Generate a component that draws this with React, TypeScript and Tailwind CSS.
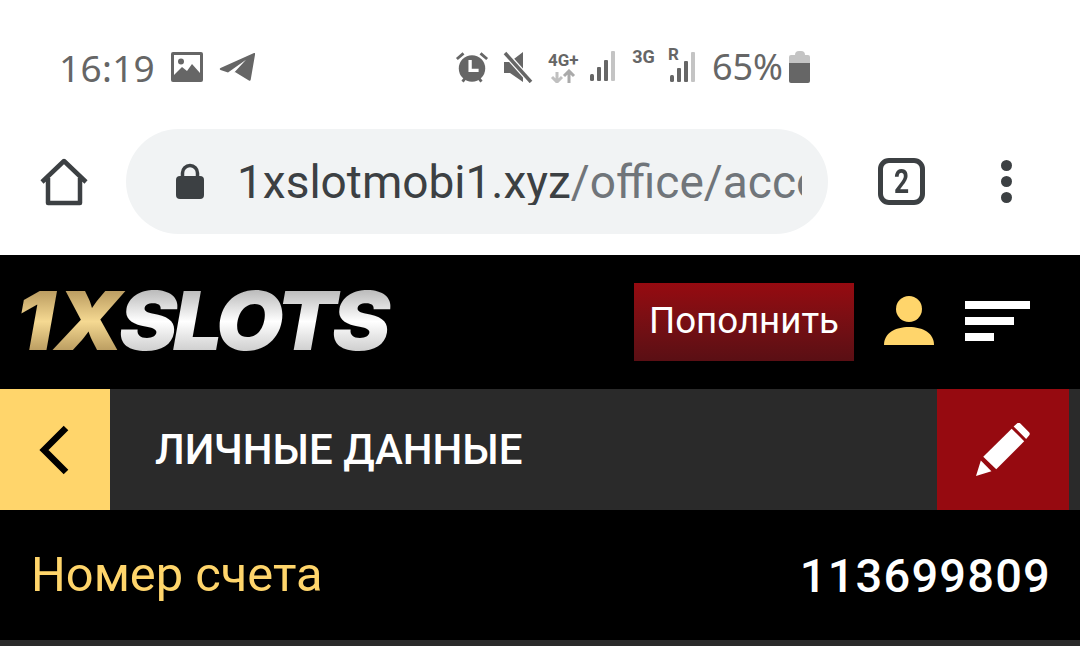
function Signal({ className = '' }: { className?: string }) {
  return (
    <svg width="28" height="30" viewBox="0 0 28 30" className={className}>
      <rect x="0" y="23" width="4" height="7" rx="1.5" fill="#666" />
      <rect x="7" y="16" width="4" height="14" rx="1" fill="#666" />
      <rect x="14" y="9" width="4" height="21" rx="1" fill="#666" />
      <rect x="21" y="0" width="4" height="30" rx="1" fill="#c4c4c4" />
    </svg>
  );
}

function StatusBar() {
  return (
    <div className="h-[129px] flex items-center pl-[59px] pr-[270px] pt-[5px] text-[#666666]">
      <span className="text-[37px] leading-none font-['Noto_Sans',sans-serif] tracking-[0.3px] w-[112px]">16:19</span>
      {/* gallery */}
      <svg width="32" height="30" viewBox="0 0 32 30">
        <rect width="32" height="30" rx="2" fill="#666" />
        <rect x="3" y="3" width="26" height="20" fill="#fff" />
        <circle cx="10" cy="9.5" r="3" fill="#666" />
        <path d="M3 23l8-8 5 4 5-7 8 9v6H3z" fill="#666" />
      </svg>
      {/* telegram */}
      <svg width="36" height="30" viewBox="0 0 36 30" className="ml-[16px]">
        <path d="M35 1c.8-.3 1.300.3 1.100 1.200l-4.400 25.600c-.2 1-1 1.300-1.800.7L16 20l-1 .8 12-13-18 12.600-7.500-2.500c-1-.4-1-1.300 0-1.800z" fill="#666" />
      </svg>

      <div className="ml-auto flex items-center">
        {/* alarm */}
        <svg width="34" height="33" viewBox="0 0 36 34">
          <path d="M2 8l7-6M34 8l-7-6M8 32l3-4M28 32l-3-4" stroke="#666" strokeWidth="3" />
          <circle cx="18" cy="18" r="14" fill="#666" />
          <path d="M16 9v11h9" stroke="#fff" strokeWidth="3.500" fill="none" />
        </svg>
        {/* muted */}
        <svg width="30" height="32" viewBox="0 0 30 32" className="ml-[14px]">
          <path d="M1 11h6L20 1v30L7 22H1z" fill="#666" />
          <path d="M2 2l26 29" stroke="#fff" strokeWidth="6" />
          <path d="M2 2l26 29" stroke="#666" strokeWidth="3.500" />
        </svg>
        <div className="ml-[14px] w-[32px] flex flex-col items-center">
          <span className="text-[17px] leading-[17px] font-bold font-['Roboto',sans-serif] whitespace-nowrap">4G+</span>
          <svg width="26" height="14" viewBox="0 0 26 14">
            <path d="M7 14V4M2 9l5 5 5-5" stroke="#c0c0c0" strokeWidth="3" fill="none" transform="translate(0 -1)" />
            <path d="M19 14V2M14 7l5-5 5 5" stroke="#aaa" strokeWidth="3" fill="none" />
          </svg>
        </div>
        <Signal className="ml-[11px] -mt-[2px]" />
        <span className="ml-[14px] mb-[20px] text-[18px] leading-none font-bold font-['Roboto',sans-serif]">3G</span>
        <div className="relative ml-[13px] w-[29px] h-[32px] -mt-[4px]">
          <span className="absolute left-0 -top-[3px] text-[17px] leading-none font-bold font-['Roboto',sans-serif]">R</span>
          <Signal className="absolute left-[2px] top-[3px]" />
        </div>
        <span className="ml-[15px] text-[36px] leading-none font-['Noto_Sans',sans-serif]">65%</span>
        {/* battery */}
        <div className="ml-[6px] flex flex-col items-center">
          <div className="w-[10px] h-[4px] rounded-t-sm bg-[#c4c4c4]" />
          <div className="w-[21px] h-[28px] rounded-[2px] bg-[#666666] border-t-[8px] border-[#c4c4c4]" />
        </div>
      </div>
    </div>
  );
}

function BrowserBar() {
  return (
    <div className="h-[126px] flex items-start pl-[40px] font-['Roboto',sans-serif]">
      <svg width="48" height="48" viewBox="0 0 48 48" className="mt-[29px]">
        <path d="M2 24L24 3l22 21M8 20v25h32V20" stroke="#3c4043" strokeWidth="4.500" fill="none" strokeLinejoin="round" />
      </svg>
      <div className="ml-[38px] w-[702px] h-[105px] rounded-full bg-[#f1f3f4] flex items-center pl-[49px]">
        <svg width="30" height="38" viewBox="0 0 30 38" className="shrink-0">
          <path d="M7.500 15V10a7.500 7.500 0 0 1 15 0v5" stroke="#3c4043" strokeWidth="3.500" fill="none" />
          <rect x="1" y="13" width="28" height="23" rx="4" fill="#3c4043" />
        </svg>
        <div className="ml-[32px] w-[565px] overflow-hidden whitespace-nowrap text-[46px] leading-none pt-[1px]">
          <span className="text-[#3c4043]">1xslotmobi1.xyz</span>
          <span className="text-[#70757a]">/office/account</span>
        </div>
      </div>
      <div className="ml-[50px] mt-[29px] w-[47px] h-[47px] rounded-[11px] border-[5px] border-[#3c4043] flex items-center justify-center text-[33px] leading-none font-bold text-[#3c4043]">
        <span className="scale-x-[0.8]">2</span>
      </div>
      <div className="ml-[76px] mt-[31px] flex flex-col gap-[5px]">
        <span className="w-[11px] h-[11px] rounded-full bg-[#3c4043]" />
        <span className="w-[11px] h-[11px] rounded-full bg-[#3c4043]" />
        <span className="w-[11px] h-[11px] rounded-full bg-[#3c4043]" />
      </div>
    </div>
  );
}

function SiteHeader() {
  return (
    <div className="h-[134px] bg-black flex items-center pl-[21px] font-['Roboto',sans-serif]">
      <div className="w-[613px]">
        <div className="-ml-[6px] flex items-center origin-left scale-x-[1.08] font-['Inter',sans-serif] font-black italic text-[81px] leading-none pb-[2px]">
          <span className="bg-gradient-to-b from-[#a98a52] via-[#f5d992] to-[#a5874f] bg-clip-text text-transparent pr-[8px] tracking-[0px]">1X</span>
          <span className="bg-gradient-to-b from-[#a8a8a8] via-[#ffffff] to-[#bdbdbd] bg-clip-text text-transparent pr-[6px] -ml-[12px] tracking-[-4px]">SLOTS</span>
        </div>
      </div>
      <div className="w-[220px] h-[78px] mb-[1px] bg-gradient-to-b from-[#960a10] to-[#5a0f14] flex items-center justify-center text-white text-[36.700px] leading-none">
        Пополнить
      </div>
      <svg width="52" height="52" viewBox="0 0 52 52" className="ml-[29px] mb-[2px]">
        <circle cx="26" cy="14" r="13" fill="#ffd56b" />
        <path d="M1 50c0-12 11-18 25-18s25 6 25 18z" fill="#ffd56b" />
      </svg>
      <div className="ml-[30px] mb-[2px] flex flex-col gap-[8px]">
        <div className="w-[65px] h-[8px] bg-white" />
        <div className="w-[49px] h-[8px] bg-white" />
        <div className="w-[29px] h-[8px] bg-white" />
      </div>
    </div>
  );
}

function TitleBar() {
  return (
    <div className="h-[121px] bg-[#2a2a2a] flex items-center font-['Roboto',sans-serif]">
      <div className="w-[110px] h-full bg-[#ffd56b] flex items-center justify-center">
        <svg width="32" height="50" viewBox="0 0 32 50">
          <path d="M27 3L5 25l22 22" stroke="#000" strokeWidth="6.500" fill="none" />
        </svg>
      </div>
      <span className="ml-[45px] text-white text-[42px] leading-none font-medium">ЛИЧНЫЕ ДАННЫЕ</span>
      <div className="ml-auto mr-[11px] w-[132px] h-full bg-[#960a10] flex items-center justify-center">
        <svg width="54" height="54" viewBox="0 0 56 56">
          <path d="M0 55l5-16 11 11z" fill="#fff" />
          <path d="M7.500 35L37 6l13 13-29 29z" fill="#fff" />
          <path d="M39 3.500l3.500-3c1-1 2.500-1 3.500 0l9 9c1 1 1 2.500 0 3.500l-3 3.500z" fill="#fff" />
        </svg>
      </div>
    </div>
  );
}

export default function App() {
  return (
    <div className="w-[1080px] h-[646px] overflow-hidden bg-white flex flex-col">
      <StatusBar />
      <BrowserBar />
      <SiteHeader />
      <TitleBar />
      <div className="h-[130px] bg-black flex items-center justify-between pl-[31px] pr-[29px] font-['Roboto',sans-serif] leading-none">
        <span className="text-[#ffd56b] text-[48.800px]">Номер счета</span>
        <span className="text-white text-[47px] font-medium tracking-[1.200px]">113699809</span>
      </div>
      <div className="flex-1 bg-[#2a2a2a]" />
    </div>
  );
}
